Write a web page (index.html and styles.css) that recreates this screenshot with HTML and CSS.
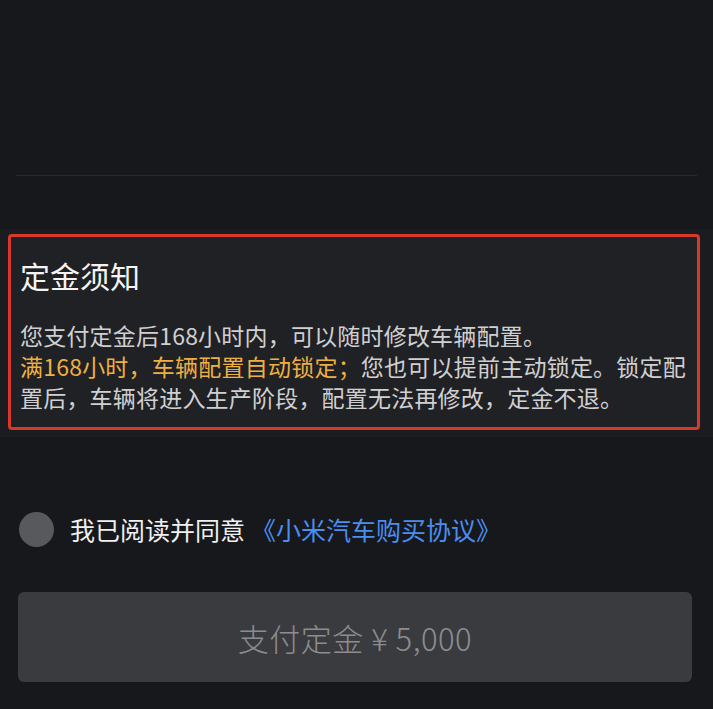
FILE: index.html
```html
<!DOCTYPE html>
<html lang="zh-CN">
<head>
<meta charset="utf-8">
<title>定金须知</title>
<link rel="stylesheet" href="styles.css">
</head>
<body>
<div class="page">
  <div class="top-area"></div>
  <div class="divider"></div>
  <section class="notice-band">
    <div class="notice">
      <h2 class="notice-title">定金须知</h2>
      <p class="notice-text">您支付定金后168小时内，可以随时修改车辆配置。</p>
      <p class="notice-text"><span class="highlight">满168小时，车辆配置自动锁定；</span>您也可以提前主动锁定。锁定配置后，车辆将进入生产阶段，配置无法再修改，定金不退。</p>
    </div>
  </section>
  <label class="agree-row">
    <span class="radio"></span>
    <span class="agree-text">我已阅读并同意</span>
    <span class="agree-link">《小米汽车购买协议》</span>
  </label>
  <button class="pay-btn" type="button">支付定金 ¥ 5,000</button>
</div>
</body>
</html>
```

FILE: styles.css
```css
html, body {
  margin: 0;
  padding: 0;
  background: #17181c;
}

body {
  font-family: "Noto Sans CJK SC", "Noto Sans", sans-serif;
  color: #d2d2d4;
}

.page {
  width: 713px;
  min-height: 709px;
  display: flex;
  flex-direction: column;
}

.top-area {
  height: 175px;
}

.divider {
  height: 1px;
  margin: 0 16px;
  background: #2a2b2f;
}

.notice-band {
  margin-top: 53px;
  padding: 5px 13px 7px 8px;
  background: #1b1c1f;
}

.notice {
  border: 3px solid #d9392b;
  border-radius: 4px;
  padding: 18px 11px 14px 9px;
  background: #202124;
}

.notice-title {
  margin: 0;
  font-size: 30px;
  line-height: 40px;
  font-weight: 400;
  color: #f4f4f4;
}

.notice-text {
  margin: 0;
  font-size: 23px;
  line-height: 31px;
  letter-spacing: 0.2px;
  text-align: justify;
  color: #d0d0d2;
}

.notice-title + .notice-text {
  margin-top: 25px;
}

.highlight {
  color: #eeb043;
}

.agree-row {
  display: flex;
  align-items: center;
  margin-top: 72px;
  padding-left: 19px;
  height: 40px;
}

.radio {
  width: 35px;
  height: 35px;
  margin-right: 16px;
  border-radius: 50%;
  background: #58595d;
  flex: none;
}

.agree-text {
  font-size: 25px;
  line-height: 32px;
  color: #f0f0f0;
}

.agree-link {
  margin-left: 6px;
  font-size: 25px;
  line-height: 32px;
  color: #4a8ef0;
}

.pay-btn {
  margin: 43px 21px 0 18px;
  height: 90px;
  border: none;
  border-radius: 6px;
  background: #3a3b3e;
  color: #8c8d90;
  font-family: "Noto Sans CJK SC", "Noto Sans", sans-serif;
  font-size: 31px;
  font-weight: 300;
  letter-spacing: 0.5px;
}
```
